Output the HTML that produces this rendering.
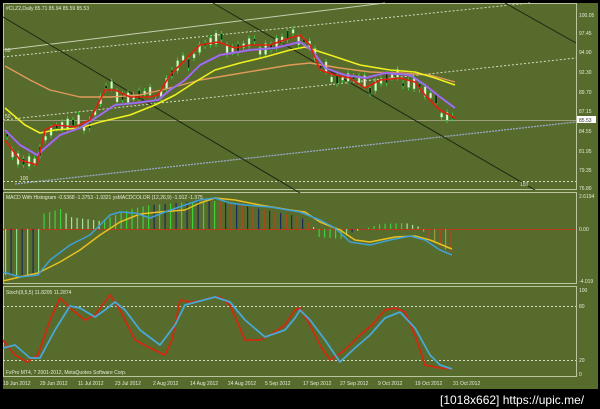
<!DOCTYPE html>
<html><head><meta charset="utf-8"><style>
html,body{margin:0;padding:0;background:#000;width:600px;height:409px;overflow:hidden}
svg{display:block}
text{font-family:"Liberation Sans",sans-serif}
</style></head><body>
<svg id="s" width="600" height="409" viewBox="0 0 600 409" xmlns="http://www.w3.org/2000/svg">
<rect x="0" y="0" width="600" height="409" fill="#000"/>
<rect x="3" y="3" width="595" height="386" fill="#566b2c"/>
<g stroke="#bcc59e" stroke-width="1" fill="none">
<rect x="3.5" y="3.5" width="573" height="186"/>
<rect x="3.5" y="192.5" width="573" height="91"/>
<rect x="3.5" y="286.5" width="573" height="90"/>
</g>
<g fill="none" stroke-width="1">
<line x1="3" y1="50" x2="385" y2="3" stroke="#c9cfb0"/>
<line x1="3" y1="57" x2="530" y2="3" stroke="#d6dbc2" stroke-dasharray="2,2"/>
<line x1="3" y1="120" x2="576" y2="58" stroke="#d6dbc2" stroke-dasharray="2,2"/>
<line x1="15" y1="184" x2="576" y2="122" stroke="#9aa8c8" stroke-dasharray="2,1" stroke-width="1.3"/>
<line x1="3" y1="120.5" x2="576" y2="120.5" stroke="#9aa07a"/>
<line x1="3" y1="181.5" x2="576" y2="181.5" stroke="#d6dbc2" stroke-dasharray="2,2"/>
<line x1="3" y1="17" x2="300" y2="193" stroke="#1e2612"/>
<line x1="213" y1="3" x2="535" y2="190" stroke="#1e2612"/>
<line x1="505" y1="3" x2="576" y2="43" stroke="#1e2612"/>
</g>
<g id="candles"></g>
<g fill="none" stroke-width="1.6" stroke-linejoin="round">
<polyline stroke="#e09a5a" stroke-width="1.4" points="5,66 30,80 50,90 80,97 110,97 140,95 170,88 200,80 230,75 260,70 290,65 310,63 340,68 370,72 400,73 430,75 455,82"/>
<polyline stroke="#f0f020" points="5,108 25,125 40,133 55,130 80,128 100,122 130,115 155,105 175,95 195,82 215,70 240,63 265,57 290,50 305,47 330,55 360,65 390,70 415,72 435,78 455,85"/>
<polyline stroke="#c040e0" stroke-width="2.2" points="5,130 20,145 37,155 45,148 60,135 80,128 100,115 115,105 135,103 158,100 170,90 185,80 200,65 220,55 250,50 275,48 300,42 312,50 325,68 345,75 365,78 385,73 410,75 425,85 440,97 455,108"/>
<polyline stroke="#5fa8e8" stroke-width="0.8" points="5,130 20,145 37,155 45,148 60,135 80,128 100,115 115,105 135,103 158,100 170,90 185,80 200,65 220,55 250,50 275,48 300,42 312,50 325,68 345,75 365,78 385,73 410,75 425,85 440,97 455,108"/>
<polyline stroke="#e02010" points="5,140 20,160 37,165 45,130 55,125 75,127 90,120 105,90 115,90 130,97 150,97 158,95 170,75 185,60 200,45 218,42 235,48 250,45 270,45 290,38 300,35 310,45 320,70 335,75 350,78 365,88 380,80 400,78 415,82 425,95 440,110 455,118"/>
</g>
<g fill="#e6ead6" font-size="5">
<text x="6" y="10">#CLZ2,Daily  85.71 85.94 85.59 85.53</text>
<text x="5" y="52">50</text><text x="5" y="118">50</text><text x="20" y="180">100</text><text x="520" y="186">150</text>
<text x="579" y="17">100.05</text><text x="579" y="35">97.45</text><text x="579" y="54">94.90</text><text x="579" y="74">92.30</text><text x="579" y="94">89.70</text><text x="579" y="113">87.15</text><text x="579" y="133">84.55</text><text x="579" y="153">81.95</text><text x="579" y="172">79.35</text><text x="579" y="190">76.80</text>
</g>
<rect x="577" y="116" width="19" height="7" fill="#fff"/>
<text x="579" y="122" font-size="5" fill="#333">85.53</text>
<line x1="3" y1="229.5" x2="576" y2="229.5" stroke="#b83a1a"/>
<g id="hist"></g>
<g fill="none" stroke-width="1.5" stroke-linejoin="round">
<polyline stroke="#e8c020" points="3,281 20,277 38,273 60,262 80,250 100,235 120,222 140,214 160,212 185,210 200,203 215,198 235,200 260,205 290,210 305,212 320,222 340,230 355,240 370,242 395,237 415,236 430,240 452,249"/>
<polyline stroke="#40a0d8" points="3,272 20,277 38,275 50,260 70,245 90,235 110,215 120,212 135,213 150,218 165,212 185,205 200,200 215,198 230,203 245,205 270,207 300,212 320,220 335,228 350,242 370,245 390,240 410,236 425,240 440,250 452,255"/>
</g>
<g fill="#e6ead6" font-size="5">
<text x="6" y="199">MACD With Histogram -0.5368 -1.3753 -1.9321  ysMACDCOLOR (12,26,9) -1.912 -1.375</text>
<text x="579" y="198">2.6194</text><text x="579" y="231">0.00</text><text x="579" y="283">-4.019</text>
</g>
<g stroke="#d6dbc2" stroke-dasharray="2,2"><line x1="3" y1="306.5" x2="576" y2="306.5"/><line x1="3" y1="360.5" x2="576" y2="360.5"/></g>
<g fill="none" stroke-width="1.8" stroke-linejoin="round">
<polyline stroke="#d02a10" points="3,340 15,355 27,362 38,355 50,320 60,298 70,308 85,320 95,315 110,295 120,310 135,340 150,348 165,355 172,340 180,300 190,302 200,301 210,298 220,297 230,305 245,340 260,340 270,335 285,325 295,310 300,308 310,325 320,345 330,360 345,350 360,335 372,325 385,310 395,308 405,312 415,335 425,365 440,368 452,369"/>
<polyline stroke="#48a8d8" points="3,348 15,345 30,358 40,358 55,330 70,306 80,308 95,317 105,310 115,302 125,310 140,330 160,345 175,325 185,305 200,301 215,297 230,302 245,320 265,337 285,330 295,318 300,310 310,320 325,340 340,362 355,348 370,335 385,318 400,312 415,328 430,355 440,365 452,369"/>
</g>
<g fill="#e6ead6" font-size="5">
<text x="6" y="294">Stoch(9,5,5) 11.8205 11.2874</text>
<text x="6" y="374">FxPro MT4, ? 2001-2012, MetaQuotes Software Corp.</text>
<text x="579" y="292">100</text><text x="579" y="308">80</text><text x="579" y="362">20</text><text x="579" y="376">0</text>
<text x="3" y="385">19 Jun 2012</text><text x="40" y="385">29 Jun 2012</text><text x="78" y="385">11 Jul 2012</text><text x="115" y="385">23 Jul 2012</text><text x="153" y="385">2 Aug 2012</text><text x="190" y="385">14 Aug 2012</text><text x="228" y="385">24 Aug 2012</text><text x="265" y="385">5 Sep 2012</text><text x="303" y="385">17 Sep 2012</text><text x="340" y="385">27 Sep 2012</text><text x="378" y="385">9 Oct 2012</text><text x="415" y="385">19 Oct 2012</text><text x="453" y="385">31 Oct 2012</text>
</g>
<text x="440" y="404" font-family="Liberation Mono,monospace" font-size="12" fill="#fff">[1018x662] https://upic.me/</text>
</svg>
<script>
var NS="http://www.w3.org/2000/svg";
function interp(pts,x){for(var i=0;i<pts.length-1;i++){if(x>=pts[i][0]&&x<=pts[i+1][0]){var t=(x-pts[i][0])/(pts[i+1][0]-pts[i][0]);return pts[i][1]+t*(pts[i+1][1]-pts[i][1]);}}return pts[pts.length-1][1];}
var hv=[[5,-46],[38,-46],[42,15],[60,20],[70,12],[100,8],[115,14],[130,20],[150,24],[200,28],[215,28],[240,24],[300,12],[312,4],[318,-8],[340,-10],[350,-4],[380,5],[405,6],[420,2],[425,-6],[440,-18],[455,-26]];
var g=document.getElementById("hist"),prev=null,k=0;
for(var x=5;x<=455;x+=5.5){var v=interp(hv,x);var col;
 if(v>=0){col=(prev!==null&&v>=prev)?"#3ed03e":"#a8e0a0"; if(x>215&&x<310)col=(k%2)?"#c0401a":"#1c2a5a"; if(x>150&&x<215&&k%2)col="#1c2a5a";}
 else{col=(k%2)?"#1c2a5a":"#8fd890"; if(x>310&&x<345)col="#3ed03e"; if(x>420)col=(k%2)?"#c0401a":"#9a9a40";}
 var r=document.createElementNS(NS,"rect");r.setAttribute("x",x);r.setAttribute("width",1.2);
 r.setAttribute("y",v>=0?229-v:229);r.setAttribute("height",Math.abs(v));r.setAttribute("fill",col);g.appendChild(r);prev=v;k++;}
var red=[[5,140],[20,160],[37,165],[45,130],[55,125],[75,127],[90,120],[105,90],[115,90],[130,97],[150,97],[158,95],[170,75],[185,60],[200,45],[218,42],[235,48],[250,45],[270,45],[290,38],[300,35],[310,45],[320,70],[335,75],[350,78],[365,88],[380,80],[400,78],[415,82],[425,95],[440,110],[455,118]];
var c=document.getElementById("candles");
for(var i=0,x=6;x<456;x+=5.5,i++){var m=interp(red,x);var off=((i*37)%13)-6;var h=3+((i*13)%9);
 var y=m+off-h/2;var l=document.createElementNS(NS,"line");l.setAttribute("x1",x+1);l.setAttribute("x2",x+1);l.setAttribute("y1",y-3);l.setAttribute("y2",y+h+3);l.setAttribute("stroke","#40c040");c.appendChild(l);
 var r=document.createElementNS(NS,"rect");r.setAttribute("x",x);r.setAttribute("y",y);r.setAttribute("width",2.2);r.setAttribute("height",h);r.setAttribute("fill",(i%3==0)?"#1a2010":"#f0f0d8");r.setAttribute("stroke","#40c040");r.setAttribute("stroke-width","0.4");c.appendChild(r);}
</script>
</body></html>
